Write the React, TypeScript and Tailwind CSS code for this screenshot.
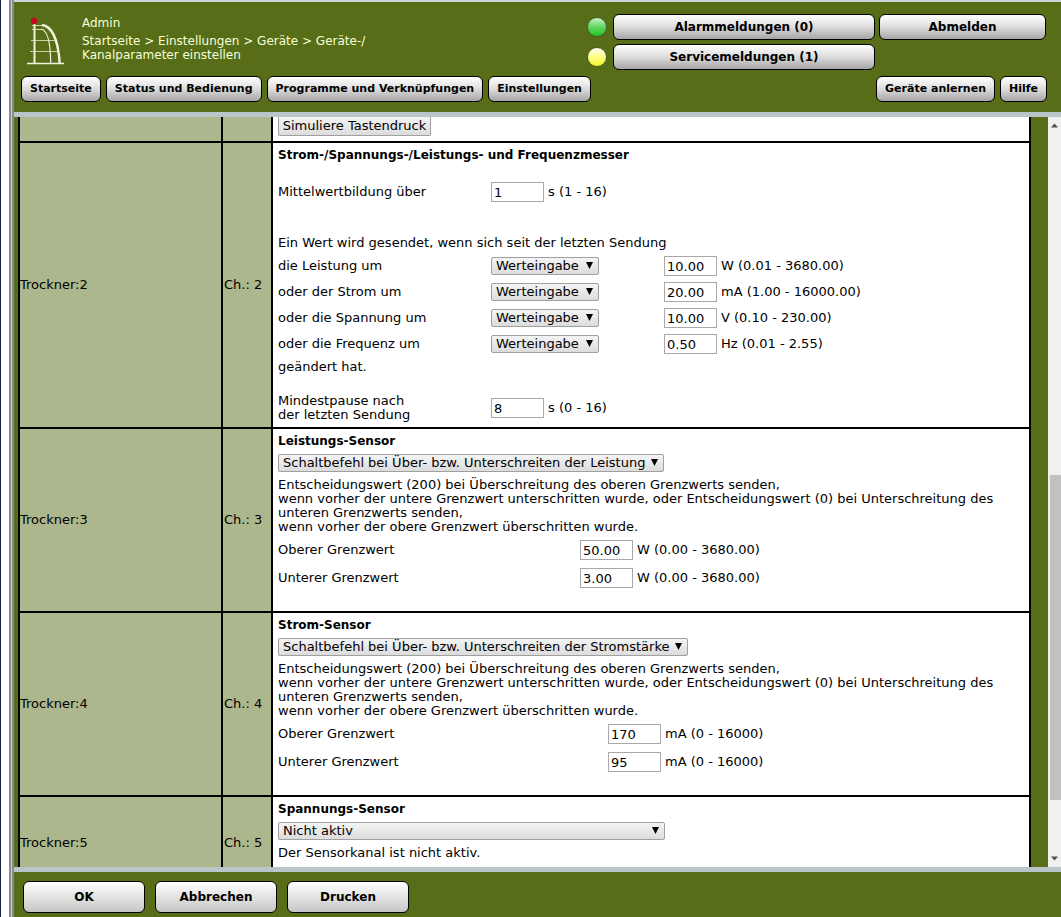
import { useId } from "react";
import type { ReactNode } from "react";

const LIMIT_TEXT = [
  "Entscheidungswert (200) bei Überschreitung des oberen Grenzwerts senden,",
  "wenn vorher der untere Grenzwert unterschritten wurde, oder Entscheidungswert (0) bei Unterschreitung des unteren Grenzwerts senden,",
  "wenn vorher der obere Grenzwert überschritten wurde.",
];

const TRIGGERS = [
  { label: "die Leistung um", value: "10.00", unit: "W (0.01 - 3680.00)" },
  { label: "oder der Strom um", value: "20.00", unit: "mA (1.00 - 16000.00)" },
  { label: "oder die Spannung um", value: "10.00", unit: "V (0.10 - 230.00)" },
  { label: "oder die Frequenz um", value: "0.50", unit: "Hz (0.01 - 2.55)" },
];

function Logo() {
  return (
    <svg width="38" height="50" viewBox="0 0 38 50" fill="none" className="shrink-0" aria-hidden="true">
      <g stroke="#eef3dc">
        <path d="M7.5 7V46" strokeWidth="2" />
        <path d="M15 8C24 9 31 21 32.700 46" strokeWidth="2.400" />
        <path d="M14 12C20 13 23.500 24 23.700 46" strokeWidth="1.200" />
        <path d="M5 8.500H17M5 12.500H17M4 23.500H29M3 34.500H31" strokeWidth="1" opacity="0.75" />
        <path d="M0 46.500H37" strokeWidth="1.500" />
      </g>
      <circle cx="7" cy="4" r="3.200" fill="#c80a1e" />
    </svg>
  );
}

function HeaderButton({ children, className = "" }: { children: ReactNode; className?: string }) {
  return (
    <button
      className={`h-[26px] rounded-md border border-black bg-linear-to-b from-white via-[#dcdcdc] to-[#a6a6a6] px-2 font-bold whitespace-nowrap ${className}`}
    >
      {children}
    </button>
  );
}

function FooterButton({ children }: { children: ReactNode }) {
  return (
    <button className="h-8 w-[122px] rounded-md border border-black bg-linear-to-b from-white to-[#c6c6c6] font-bold">
      {children}
    </button>
  );
}

function Led({ color }: { color: "green" | "yellow" }) {
  const fill = color === "green" ? "from-[#c4f0c4] via-[#5fd660] to-[#10c818]" : "from-[#fffff0] via-[#ffff80] to-[#f4f400]";
  return <span className={`size-5 shrink-0 rounded-full border border-[#47602a] bg-linear-to-b ${fill}`} />;
}

function Select({ label, option, className }: { label: string; option: string; className: string }) {
  return (
    <div className={`relative ${className}`}>
      <select
        aria-label={label}
        className="block h-[18px] w-full appearance-none rounded-xs border border-[#a0a0a0] bg-linear-to-b from-[#f4f4f4] to-[#dcdcdc] pl-1 leading-4"
      >
        <option>{option}</option>
      </select>
      <svg width="7" height="7" viewBox="0 0 7 7" className="pointer-events-none absolute top-[5px] right-1.5" aria-hidden="true">
        <path d="M0 0H7L3.500 7Z" fill="#000" />
      </svg>
    </div>
  );
}

function NumberField({ id, value, unit }: { id: string; value: string; unit: string }) {
  return (
    <div className="flex items-center gap-1">
      <input id={id} type="text" defaultValue={value} className="h-5 w-[53px] border border-[#a9a9a9] bg-white px-0.5" />
      <span>{unit}</span>
    </div>
  );
}

function Channel({ name, channel, children }: { name: string; channel: string; children: ReactNode }) {
  return (
    <tr className="border-y-2 border-black">
      <td className="border-x-2 border-black bg-[#adb78d]">{name}</td>
      <td className="border-x-2 border-black bg-[#adb78d] pl-px">{channel}</td>
      <td className="border-x-2 border-black bg-white pt-[5px] pl-[5px] align-top">{children}</td>
    </tr>
  );
}

function PowerMeter() {
  const id = useId();
  return (
    <div className="pb-[5px]">
      <h2 className="text-[12px] leading-[14px] font-bold">Strom-/Spannungs-/Leistungs- und Frequenzmesser</h2>
      <div className="mt-[17px] grid h-[26px] grid-cols-[213px_1fr] items-center">
        <label htmlFor={`${id}-avg`}>Mittelwertbildung über</label>
        <NumberField id={`${id}-avg`} value="1" unit="s (1 - 16)" />
      </div>
      <p className="mt-7 leading-5">Ein Wert wird gesendet, wenn sich seit der letzten Sendung</p>
      {TRIGGERS.map((t, i) => (
        <div key={t.label} className="grid h-[26px] grid-cols-[213px_173px_1fr] items-center">
          <label htmlFor={`${id}-${i}`}>{t.label}</label>
          <Select label={t.label} option="Werteingabe" className="w-[108px]" />
          <NumberField id={`${id}-${i}`} value={t.value} unit={t.unit} />
        </div>
      ))}
      <p className="leading-5">geändert hat.</p>
      <div className="mt-[17px] grid grid-cols-[213px_1fr] items-center">
        <label htmlFor={`${id}-pause`}>
          Mindestpause nach
          <br />
          der letzten Sendung
        </label>
        <NumberField id={`${id}-pause`} value="8" unit="s (0 - 16)" />
      </div>
    </div>
  );
}

type LimitSensorProps = {
  title: string;
  option: string;
  selectClass: string;
  gridClass: string;
  upper: string;
  lower: string;
  unit: string;
};

function LimitSensor({ title, option, selectClass, gridClass, upper, lower, unit }: LimitSensorProps) {
  const id = useId();
  return (
    <div className="pb-[19px]">
      <h2 className="text-[12px] leading-[14px] font-bold">{title}</h2>
      <Select label={title} option={option} className={`mt-[6px] ${selectClass}`} />
      <div className="mt-1.5 mb-0.5 max-w-[720px]">
        {LIMIT_TEXT.map((line) => (
          <p key={line}>{line}</p>
        ))}
      </div>
      <div className={`grid auto-rows-[28px] items-center ${gridClass}`}>
        <label htmlFor={`${id}-upper`}>Oberer Grenzwert</label>
        <NumberField id={`${id}-upper`} value={upper} unit={unit} />
        <label htmlFor={`${id}-lower`}>Unterer Grenzwert</label>
        <NumberField id={`${id}-lower`} value={lower} unit={unit} />
      </div>
    </div>
  );
}

function Header() {
  return (
    <header className="flex flex-col gap-1.5 border-b-[5px] border-[#bac5c9] bg-[#576d17] pt-3 pb-2.5 pl-[7px]">
      <div className="flex justify-between pr-[15px]">
        <div className="flex pl-1.5 text-[#f6ffd8]">
          <div className="pt-[3px]">
            <Logo />
          </div>
          <div className="pt-0.5 pl-[17px]">
            <p>Admin</p>
            <nav className="mt-1" aria-label="Pfad">
              <a href="#start">Startseite</a> &gt; <a href="#einstellungen">Einstellungen</a> &gt; <a href="#geraete">Geräte</a> &gt; Geräte-/
              <br />
              Kanalparameter einstellen
            </nav>
          </div>
        </div>
        <div className="grid grid-cols-[22px_262px_167px] items-center gap-1">
          <Led color="green" />
          <HeaderButton>Alarmmeldungen (0)</HeaderButton>
          <HeaderButton>Abmelden</HeaderButton>
          <Led color="yellow" />
          <HeaderButton>Servicemeldungen (1)</HeaderButton>
        </div>
      </div>
      <div className="flex gap-[5px] pr-3.5 text-[11px]">
        <HeaderButton>Startseite</HeaderButton>
        <HeaderButton>Status und Bedienung</HeaderButton>
        <HeaderButton>Programme und Verknüpfungen</HeaderButton>
        <HeaderButton>Einstellungen</HeaderButton>
        <HeaderButton className="ml-auto">Geräte anlernen</HeaderButton>
        <HeaderButton>Hilfe</HeaderButton>
      </div>
    </header>
  );
}

function ScrollRail() {
  return (
    <div className="flex w-[13px] shrink-0 flex-col items-end bg-[#f0f0f0] py-1.5" aria-hidden="true">
      <svg width="9" height="5" viewBox="0 0 9 5" className="mr-0.5">
        <path d="M1 4.500L4.500 0.500L8 4.500Z" fill="#505050" />
      </svg>
      <div className="grow-[347]" />
      <div className="w-[11px] grow-[325] bg-[#c1c1c1]" />
      <div className="grow-[56]" />
      <svg width="9" height="5" viewBox="0 0 9 5" className="mr-0.5">
        <path d="M1 0.500L4.500 4.500L8 0.500Z" fill="#505050" />
      </svg>
    </div>
  );
}

export default function App() {
  return (
    <div className="flex h-screen bg-white font-['DejaVu_Sans',Verdana,sans-serif] text-[12px] leading-[14px] text-black">
      <div className="w-px shrink-0 bg-[#14203c]" />
      <div className="w-2 shrink-0 bg-white" />
      <div className="w-[5px] shrink-0 border-x-2 border-[#8a8a8e] bg-[#d0d0d4]" />
      <div className="flex min-w-0 flex-1 flex-col border-t-2 border-[#ccd5da]">
        <Header />
        <main className="flex min-h-0 grow overflow-hidden bg-[#576d17] text-[13px] leading-[14px]">
          <div className="min-w-0 grow overflow-hidden pr-[17px] pl-1">
            <table className="w-full table-fixed border-collapse">
              <colgroup>
                <col className="w-[203px]" />
                <col className="w-[50px]" />
                <col />
              </colgroup>
              <tbody>
                <tr className="h-[25px]">
                  <td className="border-x-2 border-black bg-[#adb78d]" />
                  <td className="border-x-2 border-black bg-[#adb78d]" />
                  <td className="border-x-2 border-black bg-white pl-[5px] align-top">
                    <button className="block h-[19px] w-[153px] rounded-b-xs border border-t-0 border-[#a0a0a0] bg-linear-to-b from-[#f4f4f4] to-[#dcdcdc]">
                      Simuliere Tastendruck
                    </button>
                  </td>
                </tr>
                <Channel name="Trockner:2" channel="Ch.: 2">
                  <PowerMeter />
                </Channel>
                <Channel name="Trockner:3" channel="Ch.: 3">
                  <LimitSensor
                    title="Leistungs-Sensor"
                    option="Schaltbefehl bei Über- bzw. Unterschreiten der Leistung"
                    selectClass="w-[386px]"
                    gridClass="grid-cols-[302px_1fr]"
                    upper="50.00"
                    lower="3.00"
                    unit="W (0.00 - 3680.00)"
                  />
                </Channel>
                <Channel name="Trockner:4" channel="Ch.: 4">
                  <LimitSensor
                    title="Strom-Sensor"
                    option="Schaltbefehl bei Über- bzw. Unterschreiten der Stromstärke"
                    selectClass="w-[410px]"
                    gridClass="grid-cols-[330px_1fr]"
                    upper="170"
                    lower="95"
                    unit="mA (0 - 16000)"
                  />
                </Channel>
                <Channel name="Trockner:5" channel="Ch.: 5">
                  <div className="pb-7">
                    <h2 className="text-[12px] leading-[14px] font-bold">Spannungs-Sensor</h2>
                    <Select label="Spannungs-Sensor" option="Nicht aktiv" className="mt-[6px] w-[387px]" />
                    <p className="mt-1.5">Der Sensorkanal ist nicht aktiv.</p>
                  </div>
                </Channel>
              </tbody>
            </table>
          </div>
          <ScrollRail />
        </main>
        <footer className="flex gap-2.5 border-t-[5px] border-[#bac5c9] bg-[#576d17] pt-[9px] pb-1 pl-[9px]">
          <FooterButton>OK</FooterButton>
          <FooterButton>Abbrechen</FooterButton>
          <FooterButton>Drucken</FooterButton>
        </footer>
      </div>
    </div>
  );
}
